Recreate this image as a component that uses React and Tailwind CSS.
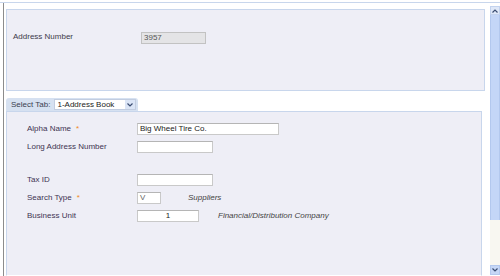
import React from "react";

const labelCls = "w-[110px] text-[8px] leading-none text-[#3e3452]";
const inputCls =
  "h-[12px] border border-[#c9c9c9] border-t-[#b5b5b5] bg-white text-[8px] leading-none text-[#222] px-[2px] flex items-center";

function Req() {
  return <span className="ml-[5px] text-[#f08a24]">*</span>;
}

function Row({ label, req, children, after }) {
  return (
    <div className="flex items-center h-[18px]">
      <div className={labelCls}>
        {label}
        {req && <Req />}
      </div>
      {children}
      {after}
    </div>
  );
}

function ScrollBar() {
  return (
    <div className="w-[10px] flex flex-col pt-[3px] pb-[1px]">
      <div className="h-[9px] bg-[#dfe8f8] border border-[#c3d3ee] flex items-center justify-center">
        <svg width="6" height="4" viewBox="0 0 6 4">
          <path d="M0.5 3.5 L3 1 L5.5 3.5" fill="none" stroke="#3b4d72" strokeWidth="1.2" />
        </svg>
      </div>
      <div className="h-[205px] bg-[#c4d6f7] border-x border-[#b3c8ee]" />
      <div className="flex-1 bg-[#f8f7f1]" />
      <div className="h-[10px] bg-[#c6d7f6] border border-[#b3c8ee] flex items-center justify-center">
        <svg width="6" height="4" viewBox="0 0 6 4">
          <path d="M0.5 0.5 L3 3 L5.5 0.5" fill="none" stroke="#3b4d72" strokeWidth="1.2" />
        </svg>
      </div>
    </div>
  );
}

export default function App() {
  return (
    <div className="w-[500px] h-[276px] bg-white overflow-hidden flex flex-col font-['Liberation_Sans',Arial,sans-serif]">
      <div className="h-[3px] border-b border-[#c8d6ec] shrink-0" />
      <div className="flex flex-1 min-h-0">
        <div className="w-[3px]" />
        <div className="w-[1px] bg-[#8c8c8c]" />
        <div className="flex-1 flex flex-col pl-[2px] min-w-0">
          {/* Header panel */}
          <div className="mt-[6px] mr-[5px] h-[82px] bg-[#eeeef6] border border-[#c8d6ec] pl-[6px] pt-[22px]">
            <div className="flex items-center h-[12px]">
              <div className="w-[128px] text-[8px] leading-none text-[#3d3a4a] -mt-[2px]">Address Number</div>
              <div className="w-[65px] h-[12px] bg-[#e4e4e6] border border-[#c2c2c2] text-[8px] leading-none text-[#555] pl-[2px] flex items-center">
                3957
              </div>
            </div>
          </div>

          {/* Tab strip */}
          <div className="mt-[7px] flex">
            <div className="h-[13px] w-[132px] bg-[#d6e1f1] rounded-t-[3px] flex items-center pl-[5px] gap-[4px]">
              <span className="text-[8px] leading-none text-[#3a3f4f]">Select Tab:</span>
              <div className="h-[11px] w-[82px] bg-white border border-[#c2cde0] flex items-center">
                <span className="flex-1 text-[8px] leading-none text-[#222] pl-[2px]">1-Address Book</span>
                <div className="w-[10px] h-full bg-[#dbe5f6] flex items-center justify-center">
                  <svg width="6" height="4" viewBox="0 0 6 4">
                    <path d="M0.5 0.5 L3 3 L5.5 0.5" fill="none" stroke="#3b4d72" strokeWidth="1.2" />
                  </svg>
                </div>
              </div>
            </div>
          </div>

          {/* Tab panel */}
          <div className="flex-1 mr-[8px] bg-[#eeeef6] border border-[#c8d6ec] border-b-white pl-[20px] pt-[8px]">
            <Row label="Alpha Name" req>
              <div className={`${inputCls} w-[142px]`}>Big Wheel Tire Co.</div>
            </Row>
            <Row label="Long Address Number">
              <div className={`${inputCls} w-[76px]`} />
            </Row>
            <div className="h-[15px]" />
            <Row label="Tax ID">
              <div className={`${inputCls} w-[76px]`} />
            </Row>
            <Row
              label="Search Type"
              req
              after={<span className="ml-[27px] text-[8px] italic text-[#444]">Suppliers</span>}
            >
              <div className={`${inputCls} w-[24px] text-[#666]`}>V</div>
            </Row>
            <Row
              label="Business Unit"
              after={
                <span className="ml-[19px] text-[8px] italic text-[#444]">Financial/Distribution Company</span>
              }
            >
              <div className={`${inputCls} w-[62px] justify-center`}>1</div>
            </Row>
          </div>
        </div>
        <ScrollBar />
      </div>
    </div>
  );
}
